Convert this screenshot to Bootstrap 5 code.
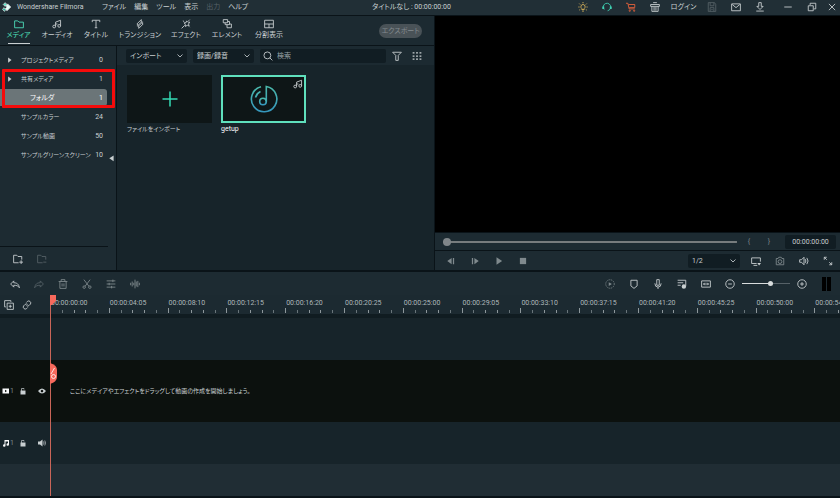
<!DOCTYPE html>
<html lang="ja">
<head>
<meta charset="utf-8">
<meta name="viewport" content="width=device-width, initial-scale=1">
<title>Wondershare Filmora</title>
<link href="https://cdn.jsdelivr.net/npm/bootstrap@5.3.0/dist/css/bootstrap.min.css" rel="stylesheet">
<style>
:root{--line:#0a1318;--bar:#212f36;--panel:#1c2a31;--side:#1d2b32;--deep:#17242a;--field:#111d23;--ink:#c9cfd1;--dim:#7f898d;--mint:#4fe0bd}
body{background:var(--deep);color:var(--ink);font-family:Roboto,"Noto Sans CJK JP",sans-serif;font-size:7px;line-height:10px;font-feature-settings:"palt";min-height:100vh;overflow:hidden}
a{color:inherit;text-decoration:none}
button{background:none;border:0;padding:0;color:inherit;font:inherit;font-feature-settings:inherit}
svg{display:block;fill:none;stroke:currentColor;stroke-width:1.4;width:10px;height:10px;flex:none}
.solid{fill:currentColor;stroke:none}
.slot{width:24px;display:flex;align-items:center;justify-content:center;flex:none}
.slot.narrow{width:16px}
.dim{color:var(--dim)}
.faint{color:#566167}
.gold{color:#d9b45a}
.teal{color:#3fd3b4}
.orange{color:#e8623c}
.fine{font-size:6px}
.titlebar{height:16px;background:var(--bar);border-bottom:1px solid var(--line);padding-bottom:2px}
.brand{width:102px;gap:5px;padding-left:2px}
.menus{gap:8px;width:142px;white-space:nowrap}
.login{width:33px}
.upper{height:256px;border-bottom:2px solid var(--line)}
.library{flex:0 0 51.8%;border-right:1px solid var(--line);min-width:0}
.tabs{height:30px;background:var(--panel);border-bottom:1px solid var(--line)}
.tab-btn{display:flex;flex-direction:column;align-items:center;gap:1px;padding-top:2px;height:28px;white-space:nowrap;flex:none}
.tab-btn.on{color:var(--mint)}
.tab-btn.on::after{content:"";width:22px;height:1px;margin-top:2px;background:var(--ink)}
.w37{width:37px}.w40{width:40px}.w38{width:38px}.w50{width:50px}.w42{width:42px}.w44{width:44px}
.export{width:43px;height:14px;border-radius:7px;background:#495257;color:#838b8f;margin-right:12px;text-align:center}
.sidebar{width:117px;flex:none;background:var(--side);border-right:1px solid var(--line)}
.tree{width:108px;padding-top:4px}
.tree a{display:flex;align-items:center;height:19px;padding:0 5px 0 7px;white-space:nowrap}
.tree a b{width:14px;flex:none}
.tree a b svg{width:6px;height:6px}
.tree a span{flex:1;font-size:6px}
.tree a.on{background:#6b7578;border-radius:0 3px 3px 0;color:#fff;height:17px;margin:1px 0;margin-right:1px;padding-right:4px}
.tree a.on span{padding-left:9px;font-size:7px}
.callout-box{left:2px;top:23px;width:113px;height:39px;border:3px solid #f50b0b;border-radius:1px;z-index:3;pointer-events:none}
.side-foot{height:24px;border-top:1px solid var(--line);width:108px;padding-left:6px}
.handle{width:8px}
.filters{height:19px;background:var(--panel);padding:0 12px 0 9px;gap:6px}
.pick,.find{height:14px;background-color:var(--field);border:0;border-radius:2px;color:var(--ink);font-size:7px;line-height:10px;padding:0 4px;font-family:inherit;font-feature-settings:inherit}
.pick{width:61px;appearance:none;background-image:url("data:image/svg+xml,%3Csvg xmlns='http://www.w3.org/2000/svg' viewBox='0 0 8 8' fill='none' stroke='%23aab2b5'%3E%3Cpath d='M1.500 2.500 4 5 6.500 2.500'/%3E%3C/svg%3E");background-repeat:no-repeat;background-position:right 3px center;background-size:8px}
.pick.ratio{width:52px}
.find{flex:1;padding:0 3px;min-width:0}
.find input{background:none;border:0;outline:0;color:inherit;padding:0;min-width:0;flex:1;font-feature-settings:inherit}
.find input::placeholder{color:#9aa4a8}
.clips{padding:10px;gap:9px}
.clip{width:85px;white-space:nowrap}
.thumb{height:48px;background:#0e1617;position:relative;margin-bottom:1px}
.thumb.on{border:2px solid #5fe0bd}
.thumb svg.big{width:28px;height:28px}
.thumb svg.tag{position:absolute;right:1px;top:2px}
.screen{background:#000}
.seek{height:19px;background:var(--side);border-bottom:1px solid var(--line);border-top:1px solid var(--line)}
.transport{height:19px;background:var(--side)}
.clock{width:51px;height:14px;background:var(--field);border-radius:2px;text-align:center;line-height:14px}
.slide{appearance:none;height:9px;background:linear-gradient(#777c7e,#777c7e) center/100% 2px no-repeat;margin:0}
.slide::-webkit-slider-thumb{appearance:none;width:8px;height:8px;border-radius:50%;background:#80868a}
.slide.zoomer{width:48px;background:linear-gradient(90deg,#d8dcdd 60%,#566167 60%) center/100% 1px no-repeat}
.slide.zoomer::-webkit-slider-thumb{width:5px;height:5px;background:#d8dcdd}
.edit{height:23px;background:var(--side);padding-left:3px;padding-right:9px}
.meters{gap:1px;padding-left:8px}
.meter{width:4px;height:14px;background:#000}
.heads{width:50px;flex:none}
.ruler-row{height:19px;background:var(--panel)}
.ruler{overflow:hidden;display:flex;flex:1;min-width:0}
.cell{flex:0 0 7.443%;white-space:nowrap;padding-top:4px;color:#aeb7ba}
.cell i{display:block;padding-left:1px;font-style:normal;height:9px;line-height:9px}
.ticks{display:flex;align-items:flex-end;height:5px}
.ticks span{flex:1;height:3px;border-left:1px solid #69757a}
.ticks span:first-child{height:5px;border-color:#8d979b}
.ticks span:nth-child(3),.ticks span:nth-child(4){border-color:#8d979b}
.gapline{height:4px;background:#101c21}
.lane{height:42px}
.lane.video{height:62px;background:#0c110e}
.lane.rest{height:34px;background:#202d34;border-bottom:2px solid var(--line)}
.lane .heads svg{width:8px;height:8px}
.head-a{width:13px;padding-left:2px;flex:none}
.head-b{width:20px;flex:none}
.head-c{width:17px;flex:none}
.playhead{left:50px;top:23px;bottom:2px;width:1px;background:#c96558;z-index:4}
.playhead svg{position:absolute;left:0;stroke:none}
.playhead .flag{top:0;width:6px;height:10px}
.playhead .cutter{top:68px;width:7px;height:21px}
</style>
<script src="https://cdn.jsdelivr.net/npm/bootstrap@5.3.0/dist/js/bootstrap.bundle.min.js"></script>
</head>
<body class="d-flex flex-column">

<header class="titlebar d-flex align-items-center">
  <div class="brand d-flex align-items-center text-nowrap">
    <svg viewBox="0 0 16 16" stroke="none"><path fill="#58e6c8" d="M5 1l3 3-3 3-3-3z"/><path fill="#e8fffa" d="M9 3l5 5-6 6-3-3 3-3-2-2z"/><path fill="#25b79c" d="M3 9l3 3-2 3-3-3z"/></svg>
    <span>Wondershare Filmora</span>
  </div>
  <nav class="menus d-flex" aria-label="メニュー">
    <a href="#">ファイル</a><a href="#">編集</a><a href="#">ツール</a><a href="#">表示</a><a href="#" class="faint">出力</a><a href="#">ヘルプ</a>
  </nav>
  <div class="flex-fill text-center text-nowrap ps-2">タイトルなし : 00:00:00:00</div>
  <button class="slot gold" aria-label="ヒント"><svg viewBox="0 0 16 16"><path d="M8 4a3.500 3.500 0 0 1 2 6.300V12H6v-1.700A3.500 3.500 0 0 1 8 4zM6.500 14.500h3M8 0v2M2 2.500l1.500 1.500M14 2.500L12.500 4M.5 8h2M13.500 8h2M2 13l1.500-1.200M14 13l-1.500-1.200"/></svg></button>
  <button class="slot teal" aria-label="サポート"><svg viewBox="0 0 16 16" stroke-width="2"><path d="M3.500 12A6 6 0 1 1 14 8c0 3-2 5-5 6"/><path d="M2 7v4M14 7v4" stroke-width="3"/></svg></button>
  <button class="slot orange" aria-label="購入"><svg viewBox="0 0 16 16" stroke-width="1.800"><path d="M0 2h3l2 9h9M4 4h10v5H5"/><circle cx="6" cy="14" r="1"/><circle cx="13" cy="14" r="1"/></svg></button>
  <button class="slot" aria-label="ギフト"><svg viewBox="0 0 16 16" stroke-width="1.800"><path d="M1 4h14v3H1zM3 7v8h10V7M6.500 8v6M9.500 8v6M5 1h6"/></svg></button>
  <a href="#" class="login text-center text-nowrap">ログイン</a>
  <button class="slot faint" aria-label="保存"><svg viewBox="0 0 16 16"><path d="M2 1h10l2 3v11H2zM5 1v5h6V1M5 15V9h6v6M7 12h2"/></svg></button>
  <button class="slot" aria-label="メール"><svg viewBox="0 0 16 16"><path d="M1 3h14v11H1zM2 4l6 5 6-5"/></svg></button>
  <button class="slot me-1" aria-label="ダウンロード"><svg viewBox="0 0 16 16"><path d="M6 1h4v6h3l-5 5-5-5h3zM2 14.500h12"/></svg></button>
  <button class="slot" aria-label="最小化"><svg viewBox="0 0 16 16"><path d="M2 8h12"/></svg></button>
  <button class="slot" aria-label="元に戻す"><svg viewBox="0 0 16 16"><path d="M2 6h8v8H2zM5 5V2h9v9h-3"/></svg></button>
  <button class="slot narrow" aria-label="閉じる"><svg viewBox="0 0 16 16"><path d="M3 3l10 10M13 3L3 13"/></svg></button>
</header>

<main class="upper d-flex">
  <section class="library d-flex flex-column">
    <div class="tabs d-flex align-items-center">
      <button class="tab-btn w37 on"><svg viewBox="0 0 16 16"><path d="M1 3h5l2 2h7v9H1z"/></svg><span>メディア</span></button>
      <button class="tab-btn w40"><svg viewBox="0 0 16 16"><circle cx="3.500" cy="12" r="2.200"/><circle cx="11.500" cy="11" r="2.200"/><path d="M5.700 12V5l8-3v9M5.700 8h3"/></svg><span>オーディオ</span></button>
      <button class="tab-btn w38"><svg viewBox="0 0 16 16" stroke-width="1.800"><path d="M2 5V2h12v3M8 2v12M6 14h4"/></svg><span>タイトル</span></button>
      <button class="tab-btn w50"><svg viewBox="0 0 16 16"><path d="M10 1L3 8l2 2 5-5h3M6 15l7-7-2-2-5 5H3M10 1v4M6 15v-4"/></svg><span>トランジション</span></button>
      <button class="tab-btn w42"><svg viewBox="0 0 16 16"><path d="M9 3l2 2 3 0-2 3 1 3-3-1-3 2 0-3-2-3 3 0zM6 10l-5 5M3 3l2 1M14 1l-2 2M14 13l-1-1"/></svg><span>エフェクト</span></button>
      <button class="tab-btn w40"><svg viewBox="0 0 16 16"><path d="M2 1h7v5H2zM5 6v3h7V4H9M8 9v5h7V8h-3"/></svg><span>エレメント</span></button>
      <button class="tab-btn w44"><svg viewBox="0 0 16 16"><path d="M1 2h14v12H1zM1 8h14M8 8v6"/></svg><span>分割表示</span></button>
      <button class="export ms-auto" disabled>エクスポート</button>
    </div>
    <div class="d-flex flex-fill">
      <aside class="sidebar d-flex position-relative">
        <div class="d-flex flex-column">
          <nav class="tree flex-fill" aria-label="ライブラリ">
            <a href="#"><b><svg class="solid" viewBox="0 0 16 16"><path d="M3 1v14l9-7z"/></svg></b><span>プロジェクトメディア</span>0</a>
            <a href="#"><b><svg class="solid" viewBox="0 0 16 16"><path d="M3 1v14l9-7z"/></svg></b><span>共有メディア</span>1</a>
            <a href="#" class="on"><b></b><span>フォルダ</span>1</a>
            <a href="#"><b></b><span>サンプルカラー</span>24</a>
            <a href="#"><b></b><span>サンプル動画</span>50</a>
            <a href="#"><b></b><span>サンプルグリーンスクリーン</span>10</a>
          </nav>
          <div class="side-foot d-flex align-items-center">
            <button class="slot" aria-label="フォルダを追加"><svg viewBox="0 0 16 16"><path d="M9 14H1V2h5l2 2h6v5M13 10v6M10 13h6"/></svg></button>
            <button class="slot faint" aria-label="フォルダを削除"><svg viewBox="0 0 16 16"><path d="M9 14H1V2h5l2 2h6v5M10 13h5"/></svg></button>
          </div>
        </div>
        <button class="handle d-flex align-items-center" aria-label="パネルを閉じる"><svg class="solid" viewBox="0 0 16 16"><path d="M9 4v9L2 8.500z"/></svg></button>
        <div class="callout-box position-absolute"></div>
      </aside>
      <div class="flex-fill">
        <div class="filters d-flex align-items-center">
          <select class="pick" aria-label="インポート"><option>インポート</option></select>
          <select class="pick" aria-label="録画/録音"><option>録画/録音</option></select>
          <label class="find d-flex align-items-center gap-1"><svg viewBox="0 0 16 16"><circle cx="7" cy="7" r="5.500"/><path d="M11 11l4 4"/></svg><input type="search" placeholder="検索" aria-label="検索"></label>
          <button aria-label="フィルター"><svg viewBox="0 0 16 16"><path d="M1 2h14L10 7v8H6V7z"/></svg></button>
          <button class="ms-1" aria-label="表示形式"><svg class="solid" viewBox="0 0 16 16"><path d="M1 2h3v2H1zM6.500 2h3v2h-3zM12 2h3v2h-3zM1 7h3v2H1zM6.500 7h3v2h-3zM12 7h3v2h-3zM1 12h3v2H1zM6.500 12h3v2h-3zM12 12h3v2h-3z"/></svg></button>
        </div>
        <div class="clips d-flex">
          <div class="clip">
            <button class="thumb w-100 d-flex align-items-center justify-content-center" aria-label="ファイルをインポート"><svg viewBox="0 0 28 28" class="big"><path stroke="#35dcb5" stroke-width="1.500" d="M14 6.500v15M6.500 14h15"/></svg></button>
            <div class="fine">ファイルをインポート</div>
          </div>
          <div class="clip">
            <div class="thumb on d-flex align-items-center justify-content-center">
              <svg class="big" viewBox="0 0 28 28"><defs><linearGradient id="disc" x2="0" y2="1"><stop stop-color="#4bb9ab"/><stop offset="1" stop-color="#3597bd"/></linearGradient></defs><g stroke="url(#disc)" stroke-width="1.600"><path d="M16.300 16.500V1.500A12.700 12.700 0 1 1 11 1.700M5.500 12.500a9 9 0 0 1 5-6"/><circle cx="13" cy="16.500" r="3.300"/></g></svg>
              <svg class="tag" viewBox="0 0 16 16"><circle cx="3.500" cy="12" r="2.200"/><circle cx="11.500" cy="11" r="2.200"/><path d="M5.700 12V5l8-3v9M5.700 8h3"/></svg>
            </div>
            <div class="text-white">getup</div>
          </div>
        </div>
      </div>
    </div>
  </section>

  <section class="d-flex flex-column flex-fill">
    <div class="screen flex-fill"></div>
    <div class="seek d-flex align-items-center ps-2 pe-1">
      <input class="slide flex-fill" type="range" value="0" aria-label="再生位置">
      <button class="slot dim" aria-label="開始点">{</button>
      <button class="slot narrow dim" aria-label="終了点">}</button>
      <div class="clock ms-2">00:00:00:00</div>
    </div>
    <div class="transport d-flex align-items-center ps-1">
      <button class="slot dim" aria-label="前のフレーム"><svg class="solid" viewBox="0 0 16 16"><path d="M9 3v10L2 8zM11 3h2v10h-2z"/></svg></button>
      <button class="slot dim" aria-label="次のフレーム"><svg class="solid" viewBox="0 0 16 16"><path d="M7 3v10l7-5zM3 3h2v10H3z"/></svg></button>
      <button class="slot dim" aria-label="再生"><svg class="solid" viewBox="0 0 16 16"><path d="M4 2v12l9-6z"/></svg></button>
      <button class="slot dim" aria-label="停止"><svg class="solid" viewBox="0 0 16 16"><path d="M3 3h10v10H3z"/></svg></button>
      <select class="pick ratio ms-auto me-1" aria-label="画質"><option>1/2</option></select>
      <button class="slot" aria-label="ディスプレイ"><svg viewBox="0 0 16 16"><path d="M9 12H1V3h14v6M4 15h6"/><path class="solid" d="M10 11h6l-3 4z"/></svg></button>
      <button class="slot dim" aria-label="スナップショット"><svg viewBox="0 0 16 16"><path d="M2 4h3l1-2h4l1 2h3v10H2z"/><circle cx="8" cy="9" r="3"/></svg></button>
      <button class="slot" aria-label="音量"><svg viewBox="0 0 16 16"><path d="M1 6h3l4-4v12l-4-4H1zM10 5q2 3 0 6M12.500 3q4 5 0 10"/></svg></button>
      <button class="slot" aria-label="全画面"><svg viewBox="0 0 16 16"><path d="M2 6V2h4M2 2l4 4M14 10v4h-4M14 14l-4-4"/></svg></button>
    </div>
  </section>
</main>

<section class="position-relative">
  <div class="edit d-flex align-items-center">
    <button class="slot" aria-label="元に戻す"><svg viewBox="0 0 16 16" stroke-width="1.600"><path d="M6 3v3c5 0 8 2 9 8-2-3-4-4-9-4v3L1 8z"/></svg></button>
    <button class="slot faint" aria-label="やり直し"><svg viewBox="0 0 16 16" stroke-width="1.600"><path d="M10 3v3c-5 0-8 2-9 8 2-3 4-4 9-4v3l5-5z"/></svg></button>
    <button class="slot dim" aria-label="削除"><svg viewBox="0 0 16 16"><path d="M1 4h14M3 4v11h10V4M5 4V1h6v3M6.500 7v5M9.500 7v5"/></svg></button>
    <button class="slot dim" aria-label="分割"><svg viewBox="0 0 16 16"><circle cx="3.500" cy="13" r="2"/><circle cx="12.500" cy="13" r="2"/><path d="M3 1l8 10.500M13 1L5 11.500"/></svg></button>
    <button class="slot dim" aria-label="調整"><svg viewBox="0 0 16 16"><path d="M1 3h14M1 8h14M1 13h14M11 1v4M5 6v4M9 11v4"/></svg></button>
    <button class="slot dim" aria-label="オーディオ編集"><svg viewBox="0 0 16 16"><path d="M1 6v4M3.500 4v8M6 6v4M8 1v14M10 4v8M12.500 3v10M15 6v4"/></svg></button>
    <button class="slot dim ms-auto" aria-label="レンダリング"><svg viewBox="0 0 16 16"><circle cx="8" cy="8" r="6.800" stroke-dasharray="2 1.600"/><path class="solid" d="M6 5v6l5-3z"/></svg></button>
    <button class="slot" aria-label="マーカー"><svg viewBox="0 0 16 16"><path d="M3 2h10v9l-5 4-5-4z"/></svg></button>
    <button class="slot" aria-label="録音"><svg viewBox="0 0 16 16"><path d="M6 1h4v9H6zM3 7q0 6 5 6t5-6M8 13v3"/></svg></button>
    <button class="slot" aria-label="音楽"><svg viewBox="0 0 16 16"><path d="M1 2h13v9M1 6h9M1 10h5"/><circle class="solid" cx="11" cy="12" r="3.500"/></svg></button>
    <button class="slot" aria-label="全体表示"><svg viewBox="0 0 16 16"><path d="M1 3h14v10H1zM4 8h8M6 6L4 8l2 2M10 6l2 2-2 2"/></svg></button>
    <button class="slot" aria-label="縮小"><svg viewBox="0 0 16 16"><circle cx="8" cy="8" r="6.800"/><path d="M5 8h6"/></svg></button>
    <input class="slide zoomer" type="range" value="60" aria-label="ズーム">
    <button class="slot" aria-label="拡大"><svg viewBox="0 0 16 16"><circle cx="8" cy="8" r="6.800"/><path d="M5 8h6M8 5v6"/></svg></button>
    <div class="meters d-flex"><div class="meter"></div><div class="meter"></div></div>
  </div>

  <div class="ruler-row d-flex">
    <div class="heads d-flex align-items-center gap-2 ps-1">
      <button aria-label="トラックを追加"><svg viewBox="0 0 16 16"><path d="M5 5h10v10H5zM3 11H1V1h10v2M10 7.500v5M7.500 10h5"/></svg></button>
      <button aria-label="リンク"><svg viewBox="0 0 16 16"><path d="M7 4l2-2q2-1.500 4 .5t.5 4L11 9q-2 1.500-4 0M9 12l-2 2q-2 1.500-4-.5t-.5-4L5 7q2-1.500 4 0"/></svg></button>
    </div>
    <div class="ruler" id="ruler"></div>
  </div>
  <div class="gapline"></div>
  <div class="lane"></div>
  <div class="lane video d-flex align-items-center">
    <div class="heads d-flex align-items-center">
      <div class="head-a d-flex align-items-center dim"><svg class="solid text-light" viewBox="0 0 16 16"><path fill-rule="evenodd" d="M1 3h13v10H1zM6 5.500v5l4-2.500z"/></svg>1</div>
      <button class="head-b d-flex justify-content-center" aria-label="ロック"><svg viewBox="0 0 16 16" stroke-width="2"><path d="M5 8V3h5v2"/><path class="solid" d="M3 7h10v8H3z"/></svg></button>
      <button class="head-c d-flex justify-content-center" aria-label="表示"><svg class="solid" viewBox="0 0 16 16"><path fill-rule="evenodd" d="M0 8q8-10 16 0-8 10-16 0zM8 5.500a2.500 2.500 0 1 0 .01 0z"/></svg></button>
    </div>
    <p class="fine m-0 flex-fill ps-3 text-nowrap"><span class="ps-1">ここにメデイアやエフェクトをドラッグして動画の作成を開始しましょう。</span></p>
  </div>
  <div class="lane d-flex align-items-center">
    <div class="heads d-flex align-items-center">
      <div class="head-a d-flex align-items-center dim"><svg class="solid text-light" viewBox="0 0 16 16"><path d="M5 2h9v9a2.500 2.500 0 1 1-2-2.300V5H7v8a2.500 2.500 0 1 1-2-2.300z"/></svg>1</div>
      <button class="head-b d-flex justify-content-center" aria-label="ロック"><svg viewBox="0 0 16 16" stroke-width="2"><path d="M5 8V3h5v2"/><path class="solid" d="M3 7h10v8H3z"/></svg></button>
      <button class="head-c d-flex justify-content-center" aria-label="ミュート"><svg viewBox="0 0 16 16"><path class="solid" d="M0 5h4l5-4v14l-5-4H0z"/><path d="M11 5q2 3 0 6M13.500 3q3 5 0 10"/></svg></button>
    </div>
  </div>
  <div class="lane rest"></div>
  <div class="playhead position-absolute">
    <svg class="flag" viewBox="0 0 6 10"><path fill="#f7695c" d="M0 0h6v6l-4 4H0z"/></svg>
    <svg class="cutter" viewBox="0 0 7 21"><path fill="#f7695c" d="M0 0q7 2 7 7v7q0 5-7 7z"/><path d="M4.500 5L1 11" stroke="#fff" stroke-width=".8"/><circle cx="3.500" cy="13.500" r="2" stroke="#fff" stroke-width=".8"/></svg>
  </div>
</section>

<script>
const stamps=["00:00:00:00","00:00:04:05","00:00:08:10","00:00:12:15","00:00:16:20","00:00:20:25","00:00:25:00","00:00:29:05","00:00:33:10","00:00:37:15","00:00:41:20","00:00:45:25","00:00:50:00","00:00:54:05"];
document.getElementById("ruler").innerHTML=stamps.map(t=>`<div class="cell"><i>${t}</i><div class="ticks"><span></span><span></span><span></span><span></span><span></span></div></div>`).join("");
</script>
</body>
</html>
